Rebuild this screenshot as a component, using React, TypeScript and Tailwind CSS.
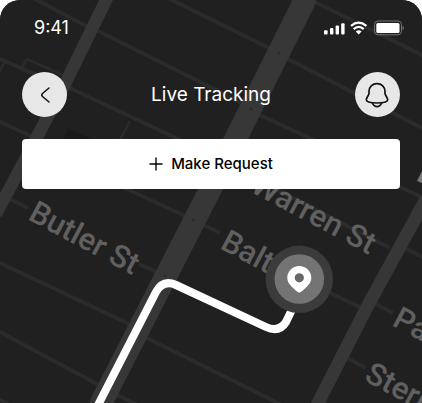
import React from "react";

const minorRoads = [
  "M33 -2 88 27 100 32 242 103 260 115 320 143 400 187 424 198",
  "M168 -2 273 50 290 60 424 129",
  "M315 2 424 56",
  "M-2 58 25 70 70 88 180 140 390 248",
  "M395 243 424 258",
  "M-2 121 33 137 127 189 183 215 220 233",
  "M10 199 28 208M139 264 165 276",
  "M328 292 362 308M372 302 393 313",
  "M-2 262 127 323 147 338 282 405",
  "M-2 331 97 384 117 395 138 405",
  "M345 357 366 368",
  "M-2 399 10 405",
];

const streets = [
  { name: "Butler St", x: 27, y: 219, angle: 28 },
  { name: "Warren St", x: 249, y: 191, angle: 28 },
  { name: "Baltic St", x: 219, y: 248, angle: 28 },
  { name: "Pacific St", x: 391, y: 325, angle: 28 },
  { name: "Sterling Pl", x: 363, y: 380, angle: 28 },
];

function TrackingMap() {
  return (
    <svg
      className="absolute inset-0 h-full w-full"
      viewBox="0 0 422 403"
      preserveAspectRatio="xMidYMin slice"
      role="img"
      aria-label="Route map"
    >
      <rect width="422" height="403" fill="#202020" />
      <path d="M62 140 68 128 94 140Z" fill="#1a1a1a" />
      <g fill="none" stroke="#2b2b2b">
        {minorRoads.map((d) => (
          <path key={d} d={d} strokeWidth="4" />
        ))}
        <path d="M21 69 27 59 65 76M-1 73 5 61M130 121 120 140" strokeWidth="2.5" />
      </g>
      <g fill="none" stroke="#373737">
        <path d="M108 -4 63 88 -4 214" strokeWidth="12.5" />
        <path d="M307 -4 210 190 99 407" strokeWidth="22.5" />
        <path d="M426 199 367 307 316 407" strokeWidth="13" />
      </g>
      <g fill="#2b2b2b">
        <circle cx="279" cy="53" r="1.5" />
        <circle cx="251" cy="109" r="1.5" />
        <circle cx="193" cy="220" r="1.5" />
        <circle cx="165" cy="276" r="1.5" />
      </g>
      <path d="M417 181 422 171V183Z" fill="#777777" />
      <g fill="#606060" fontFamily="Roboto, sans-serif" fontSize="31" fontWeight="500">
        {streets.map((s) => (
          <text key={s.name} transform={`translate(${s.x} ${s.y}) rotate(${s.angle})`}>
            {s.name}
          </text>
        ))}
      </g>
      <path
        d="M96 409 156 292Q163 279 176 285L266 327Q279 333 286 322L299 295"
        fill="none"
        stroke="#ffffff"
        strokeWidth="8"
      />
      <circle cx="299.3" cy="279.3" r="33.7" fill="#3b3b3b" />
      <circle cx="299.3" cy="279" r="24.8" fill="#747474" />
      <path
        d="M299.3 266C292.6 266 287.3 271.2 287.3 277.7C287.3 283.4 292 287 297.1 291.5Q299.3 293.3 301.5 291.5C306.6 287 311.3 283.4 311.3 277.7C311.3 271.2 306 266 299.3 266Z"
        fill="#ffffff"
      />
      <circle cx="299.3" cy="277.8" r="4.6" fill="#686868" />
    </svg>
  );
}

function StatusIcons() {
  return (
    <svg width="80" height="16" viewBox="0 0 80 16" aria-hidden="true">
      <g fill="#ffffff">
        <rect x="0" y="10.2" width="3.6" height="4.3" rx="1" />
        <rect x="6" y="8" width="3.4" height="6.5" rx="1" />
        <rect x="11.6" y="5.5" width="3.4" height="9" rx="1" />
        <rect x="17.2" y="3.2" width="3.4" height="11.3" rx="1" />
      </g>
      <g fill="none" stroke="#ffffff" strokeWidth="2.2">
        <path d="M27 5.8Q34.7 -0.4 42.4 5.8" />
        <path d="M29.7 9.1Q34.7 4.7 39.7 9.1" />
      </g>
      <path d="M31.8 11.5Q34.7 9 37.6 11.5L34.7 14.4Z" fill="#ffffff" />
      <rect x="50.5" y="1" width="27" height="13.8" rx="3.5" fill="none" stroke="#747474" />
      <rect x="52.3" y="3" width="23.2" height="10" rx="1.5" fill="#ffffff" />
      <path d="M78.6 6Q80 6.6 80 8T78.6 10Z" fill="#747474" />
    </svg>
  );
}

export default function App() {
  return (
    <main className="relative isolate min-h-screen overflow-hidden rounded-t-[20px] bg-[#202020] font-['Inter',sans-serif]">
      <TrackingMap />
      <div className="relative flex flex-col">
        <div className="flex h-14 items-center justify-between pr-[18px] pl-[34px] text-lg text-white">
          <span>9:41</span>
          <StatusIcons />
        </div>
        <header className="flex items-center justify-between px-[22px] pt-4">
          <button
            type="button"
            aria-label="Back"
            className="flex size-[45px] items-center justify-center rounded-full bg-[#e7e7e7]"
          >
            <svg width="24" height="24" viewBox="0 0 24 24" fill="none" stroke="#111111" strokeWidth="1.5" strokeLinecap="round" aria-hidden="true">
              <path d="M16 5 9.5 10.5Q8 12 9.5 13.5L16 19" />
            </svg>
          </button>
          <h1 className="text-[19px] leading-6 text-white">Live Tracking</h1>
          <button
            type="button"
            aria-label="Notifications"
            className="flex size-[45px] items-center justify-center rounded-full bg-[#e7e7e7]"
          >
            <svg width="28" height="28" viewBox="0 0 28 28" fill="none" stroke="#111111" strokeWidth="1.7" strokeLinejoin="round" aria-hidden="true">
              <path d="M14 2.7C9.4 2.7 6 6 6 10.4V12.6C6 14.3 3.3 16.6 3.3 18.8C3.3 21.4 7.6 22 14 22S24.7 21.4 24.7 18.8C24.7 16.6 22 14.3 22 12.6V10.4C22 6 18.6 2.7 14 2.7Z" />
              <path d="M9.4 22C10.3 24.4 12 25.6 14 25.6S17.7 24.4 18.6 22" />
            </svg>
          </button>
        </header>
        <div className="px-[22px] pt-[22px]">
          <button
            type="button"
            className="flex h-[50px] w-full items-center justify-center gap-2 rounded bg-white text-[15px] font-medium text-black"
          >
            <svg width="14" height="14" viewBox="0 0 14 14" stroke="#000000" strokeWidth="1.4" aria-hidden="true">
              <path d="M7 0.5V13.5M0.5 7H13.5" />
            </svg>
            Make Request
          </button>
        </div>
      </div>
    </main>
  );
}
